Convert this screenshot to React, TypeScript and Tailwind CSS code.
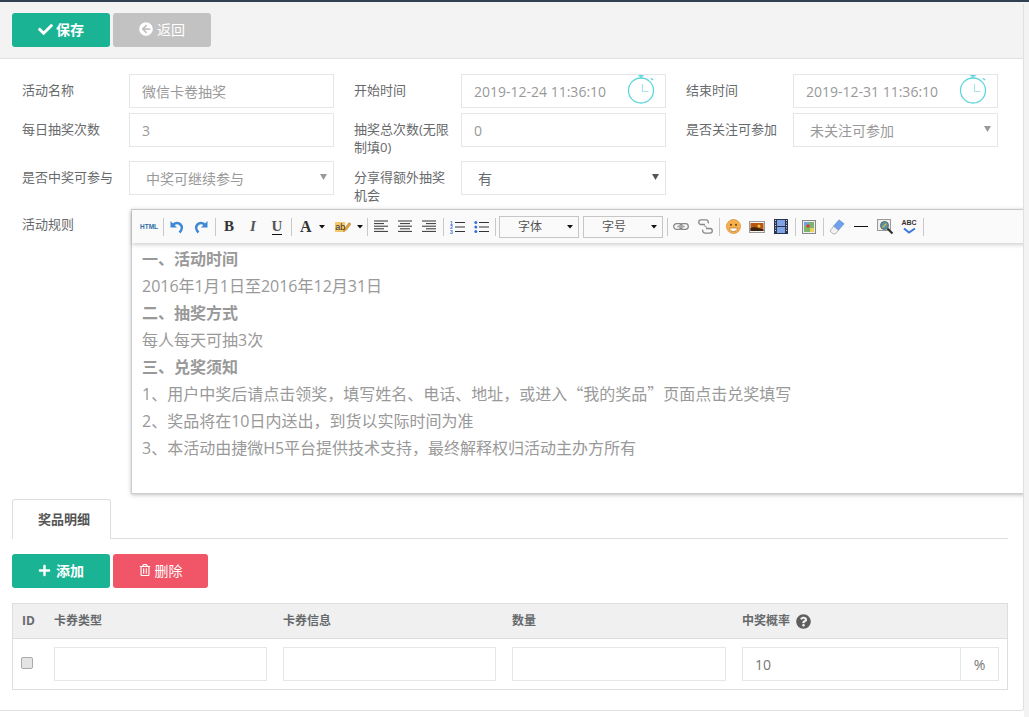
import { FaCheck, FaArrowCircleLeft, FaPlus, FaRegTrashAlt, FaQuestionCircle } from 'react-icons/fa';

const inputCls =
  'h-[34px] w-full border border-[#e5e6e7] bg-white px-3 text-[14px] text-[#999] outline-none';

function Clock() {
  return (
    <svg width="28" height="30" viewBox="0 0 28 30" className="absolute right-[11px] top-0" fill="none">
      <circle cx="14" cy="16.5" r="12.5" stroke="#5fd6dc" strokeWidth="1.3" />
      <path d="M15.500 10v7.500h6" stroke="#a5e5ea" strokeWidth="1.2" />
      <path d="M11.500 1.800h5M14 1.800v2.500" stroke="#5fd6dc" strokeWidth="1.4" />
      <path d="M24 4.200l2 1.800" stroke="#5fd6dc" strokeWidth="1.4" />
    </svg>
  );
}

function Field({ label, children }: { label: string; children: React.ReactNode }) {
  return (
    <div className="flex w-[332px] shrink-0">
      <label className="w-[107px] shrink-0 pr-2 pt-[7px] text-[13px] leading-[18px] text-[#676a6c]">{label}</label>
      <div className="w-[205px] shrink-0">{children}</div>
    </div>
  );
}

function SelectBox({ value, dark }: { value: string; dark?: boolean }) {
  return (
    <div className={`relative flex h-[34px] items-center border border-[#e5e6e7] bg-white pl-4 text-[14px] ${dark ? 'text-[#676a6c]' : 'text-[#999]'}`}>
      {value}
      <svg width="7" height="6" viewBox="0 0 7 6" className="absolute right-[6px] top-[12px]">
        <path d="M0 0h7L3.500 6z" fill={dark ? '#555' : '#999'} />
      </svg>
    </div>
  );
}

function DateInput({ value }: { value: string }) {
  return (
    <div className="relative">
      <input readOnly value={value} className={inputCls} />
      <Clock />
    </div>
  );
}

function Sep() {
  return (
    <span className="flex h-[18px] w-1 shrink-0 justify-center">
      <span className="h-full w-px bg-[#c8c8c8]" />
    </span>
  );
}

function Btn({ children, w = 'w-6' }: { children?: React.ReactNode; w?: string }) {
  return <span className={`flex h-[18px] shrink-0 items-center justify-center ${w}`}>{children}</span>;
}

function Caret() {
  return (
    <svg width="6" height="4" viewBox="0 0 6 4" className="shrink-0">
      <path d="M0 0h6L3 3.500z" fill="#111" />
    </svg>
  );
}

function Lines({ kind }: { kind: 'left' | 'center' | 'right' }) {
  const short = kind === 'left' ? 0 : kind === 'center' ? 2 : 4;
  const rows = [
    [14, 0],
    [10, short],
    [14, 0],
    [10, short],
    [14, 0],
  ];
  return (
    <svg width="14" height="13" viewBox="0 0 14 13">
      {rows.map(([w, x], i) => (
        <rect key={i} x={x} y={i * 2.6 + 0.5} width={w} height="1" fill="#333" />
      ))}
    </svg>
  );
}

function ToolSelect({ label }: { label: string }) {
  return (
    <span className="flex h-[22px] w-20 shrink-0 items-center justify-between border border-[#c6c6c6] pl-[18px] pr-[5px] text-[12px] text-[#555]">
      {label}
      <Caret />
    </span>
  );
}

function Toolbar() {
  return (
    <div className="flex h-[33px] items-center bg-[#fafafa] pl-[3px] shadow-[0_2px_4px_rgba(0,0,0,0.18)]">
      <Btn w="w-[26px] pl-[2px]">
        <span className="font-['Liberation_Sans',sans-serif] text-[6.500px] font-bold text-[#2e6da4]">HTML</span>
      </Btn>
      <Sep />
      <Btn>
        <svg width="14" height="14" viewBox="0 0 14 14" fill="none">
          <path d="M0.500 1v6.500H7z" fill="#3c88d4" />
          <path d="M3 5c2-2.500 5.500-2.500 7.500-.500 2 2 1.500 5.500-1 8" stroke="#3c88d4" strokeWidth="2.600" />
        </svg>
      </Btn>
      <Btn>
        <svg width="14" height="14" viewBox="0 0 14 14" fill="none">
          <path d="M13.500 1v6.500H7z" fill="#3c88d4" />
          <path d="M11 5C9 2.500 5.500 2.500 3.500 4.500c-2 2-1.500 5.500 1 8" stroke="#3c88d4" strokeWidth="2.600" />
        </svg>
      </Btn>
      <Sep />
      <Btn><span className="font-['Liberation_Serif',serif] text-[15px] font-bold text-[#333]">B</span></Btn>
      <Btn><span className="font-['Liberation_Serif',serif] text-[15px] font-bold italic text-[#555]">I</span></Btn>
      <Btn><span className="border-b border-[#111] font-['Liberation_Serif',serif] text-[15px] font-bold leading-[15px] text-[#555]">U</span></Btn>
      <Sep />
      <span className="flex h-[18px] w-9 shrink-0 items-center gap-[7px] pl-[7px]">
        <span className="font-['Liberation_Serif',serif] text-[16px] font-bold text-[#333]">A</span>
        <Caret />
      </span>
      <span className="flex h-[18px] w-9 shrink-0 items-center gap-[6px] pl-[6px]">
        <svg width="16" height="12" viewBox="0 0 16 12" className="shrink-0">
          <rect x="0" y="1" width="10" height="10" fill="#f7c86b" />
          <path d="M8.500 10.500l1-3 4.500-6 2 1.500-4.500 6z" fill="#e8a33a" stroke="#8a6a2a" strokeWidth="0.400" />
          <text x="0.300" y="9" fontSize="9" fontFamily="Liberation Sans" fill="#333">ab</text>
        </svg>
        <Caret />
      </span>
      <Sep />
      <Btn><Lines kind="left" /></Btn>
      <Btn><Lines kind="center" /></Btn>
      <Btn><Lines kind="right" /></Btn>
      <Sep />
      <Btn>
        <svg width="15" height="14" viewBox="0 0 15 14">
          <text x="0" y="4.500" fontSize="5" fontWeight="700" fontFamily="Liberation Sans" fill="#3a6fe0">1</text>
          <text x="0" y="9" fontSize="5" fontWeight="700" fontFamily="Liberation Sans" fill="#3a6fe0">2</text>
          <text x="0" y="13.500" fontSize="5" fontWeight="700" fontFamily="Liberation Sans" fill="#3a6fe0">3</text>
          <path d="M5 2.500h10M5 7h10M5 11.500h10" stroke="#333" strokeWidth="1" />
        </svg>
      </Btn>
      <Btn>
        <svg width="15" height="14" viewBox="0 0 15 14">
          <circle cx="1.800" cy="2.500" r="1.500" fill="#3a6fe0" />
          <circle cx="1.800" cy="7" r="1.500" fill="#3a6fe0" />
          <circle cx="1.800" cy="11.500" r="1.500" fill="#3a6fe0" />
          <path d="M5 2.500h10M5 7h10M5 11.500h10" stroke="#333" strokeWidth="1" />
        </svg>
      </Btn>
      <Sep />
      <span className="flex gap-1 pl-0.5">
        <ToolSelect label="字体" />
        <ToolSelect label="字号" />
      </span>
      <span className="w-0.5 shrink-0" />
      <Sep />
      <Btn>
        <svg width="16" height="7" viewBox="0 0 16 7" fill="none">
          <rect x="0.700" y="0.700" width="8.500" height="5.600" rx="2.800" stroke="#888" strokeWidth="1.300" />
          <rect x="6.800" y="0.700" width="8.500" height="5.600" rx="2.800" stroke="#888" strokeWidth="1.300" />
          <path d="M4 3.500h8" stroke="#aaa" strokeWidth="1.300" />
        </svg>
      </Btn>
      <Btn>
        <svg width="15" height="15" viewBox="0 0 15 15" fill="none">
          <path d="M7 5.500H3a2.300 2.300 0 0 1 0-4.600h5a2.300 2.300 0 0 1 2 3.500" stroke="#888" strokeWidth="1.300" />
          <path d="M8 9.500h4a2.300 2.300 0 0 1 0 4.600H7a2.300 2.300 0 0 1-2-3.500" stroke="#888" strokeWidth="1.300" />
          <path d="M6 6.500l3 2" stroke="#aaa" strokeWidth="1.200" />
        </svg>
      </Btn>
      <Sep />
      <Btn>
        <svg width="15" height="15" viewBox="0 0 15 15">
          <circle cx="7.500" cy="7.500" r="7" fill="#f6b04e" stroke="#d98a2b" strokeWidth="0.700" />
          <circle cx="5" cy="5.800" r="1.100" fill="#7a4a14" />
          <circle cx="10" cy="5.800" r="1.100" fill="#7a4a14" />
          <path d="M3.500 9h8c-.5 2.500-2 3.500-4 3.500S4 11.500 3.500 9z" fill="#fff" stroke="#a8621c" strokeWidth="0.600" />
        </svg>
      </Btn>
      <Btn>
        <svg width="16" height="12" viewBox="0 0 16 12">
          <rect x="0.500" y="0.500" width="15" height="11" fill="#f4f4f4" stroke="#999" />
          <rect x="1.500" y="2" width="13" height="8" fill="#b8560f" />
          <circle cx="10" cy="5" r="1.500" fill="#f7c04a" />
          <path d="M1.500 7l4-1 9 2.500V10h-13z" fill="#3a2410" />
        </svg>
      </Btn>
      <Btn>
        <svg width="14" height="15" viewBox="0 0 14 15">
          <rect x="0" y="0" width="14" height="15" fill="#2a3350" />
          <rect x="3" y="1" width="8" height="6" fill="#7ea4e6" />
          <rect x="3" y="8" width="8" height="6" fill="#7ea4e6" />
          <path d="M1 1.500h1M1 4h1M1 6.500h1M1 9h1M1 11.500h1M12 1.500h1M12 4h1M12 6.500h1M12 9h1M12 11.500h1" stroke="#ddd" strokeWidth="1" />
        </svg>
      </Btn>
      <Sep />
      <Btn>
        <svg width="14" height="14" viewBox="0 0 14 14">
          <rect x="0.500" y="0.500" width="13" height="13" fill="#eee" stroke="#888" />
          <rect x="2" y="2" width="10" height="10" fill="#7fb56a" />
          <rect x="2" y="2" width="5" height="4" fill="#6fa6df" />
          <circle cx="6" cy="6" r="1.800" fill="#d8403a" />
          <rect x="8" y="8" width="4" height="4" fill="#e6d35a" />
        </svg>
      </Btn>
      <Sep />
      <Btn>
        <svg width="16" height="16" viewBox="0 0 16 16">
          <path d="M10 0.800l5 4-5.500 6.500-5-4z" fill="#6ea2ee" stroke="#5a83c4" strokeWidth="0.600" />
          <path d="M4.500 7.300l5 4-3 3.500H4L1 12z" fill="#f2f2f2" stroke="#999" strokeWidth="0.700" />
        </svg>
      </Btn>
      <Btn><span className="h-px w-[14px] bg-[#111]" /></Btn>
      <Btn>
        <svg width="17" height="16" viewBox="0 0 17 16">
          <rect x="0.500" y="0.500" width="13" height="11" fill="#eee" stroke="#999" />
          <circle cx="7.500" cy="6.500" r="4" fill="#4f92a8" stroke="#666" />
          <path d="M5.500 8.500l4-4" stroke="#d9b84a" strokeWidth="1.200" />
          <path d="M10.500 9.500l5 5" stroke="#333" strokeWidth="2.200" />
        </svg>
      </Btn>
      <Btn>
        <span className="relative flex h-[18px] w-[15px] justify-center">
          <span className="font-['Liberation_Sans',sans-serif] text-[7px] font-bold leading-[10px] text-[#333]">ABC</span>
          <svg width="13" height="7" viewBox="0 0 13 7" className="absolute left-px top-[9px]" fill="none">
            <path d="M1 1.500l5 4 6-4" stroke="#3a78e0" strokeWidth="2" />
          </svg>
        </span>
      </Btn>
      <Sep />
    </div>
  );
}

const rules = [
  { t: '一、活动时间', b: true },
  { t: '2016年1月1日至2016年12月31日' },
  { t: '二、抽奖方式', b: true },
  { t: '每人每天可抽3次' },
  { t: '三、兑奖须知', b: true },
];

export default function App() {
  return (
    <div className="flex h-[717px] w-[1029px] flex-col overflow-hidden bg-white font-['Open_Sans','Noto_Sans_CJK_SC',sans-serif] text-[13px] text-[#676a6c]">
      <div className="h-[2px] shrink-0 bg-[#2f4050]" />
      <div className="flex flex-1">
        <div className="h-[709px] w-[1024px] shrink-0 overflow-hidden rounded-r-[3px] border-r border-b border-[#e0e0e0] bg-white">
          {/* Header */}
          <div className="flex h-[57px] gap-[3px] border-b border-[#e0e0e0] bg-[#f3f3f3] pl-3 pt-[11px]">
            <button className="flex h-[34px] w-[98px] items-center justify-center gap-[3px] rounded-[3px] bg-[#1ab394] pb-[2px] text-[14px] font-bold text-white">
              <FaCheck className="text-[15px]" /> 保存
            </button>
            <button className="flex h-[34px] w-[98px] items-center justify-center gap-1 rounded-[3px] bg-[#c2c2c2] pb-[2px] text-[14px] text-white">
              <FaArrowCircleLeft className="text-[14px]" /> 返回
            </button>
          </div>

          {/* Form */}
          <div className="pt-[15px]">
            <div className="mb-[5px] flex pl-[22px]">
              <Field label="活动名称"><input readOnly value="微信卡卷抽奖" className={inputCls} /></Field>
              <Field label="开始时间"><DateInput value="2019-12-24 11:36:10" /></Field>
              <Field label="结束时间"><DateInput value="2019-12-31 11:36:10" /></Field>
            </div>
            <div className="mb-[5px] flex pl-[22px]">
              <Field label="每日抽奖次数"><input readOnly value="3" className={inputCls} /></Field>
              <Field label="抽奖总次数(无限制填0)"><input readOnly value="0" className={inputCls} /></Field>
              <Field label="是否关注可参加"><SelectBox value="未关注可参加" /></Field>
            </div>
            <div className="mb-[5px] flex pl-[22px]">
              <Field label="是否中奖可参与"><SelectBox value="中奖可继续参与" /></Field>
              <Field label="分享得额外抽奖机会"><SelectBox value="有" dark /></Field>
            </div>

            {/* Editor */}
            <div className="flex pl-[22px]">
              <label className="w-[109px] shrink-0 pt-[6px] leading-[18px]">活动规则</label>
              <div className="h-[285px] w-[900px] shrink-0 border border-[#ccc] shadow-[0_1px_4px_rgba(0,0,0,0.25)]">
                <Toolbar />
                <div className="px-[10px] pt-[3px] text-[16px] leading-[27px] text-[#999]">
                  {rules.map((r) => (
                    <p key={r.t} className={r.b ? 'font-bold' : ''}>{r.t}</p>
                  ))}
                  <p>
                    1、用户中奖后请点击领奖，填写姓名、电话、地址，或进入
                    <span className="font-['Noto_Sans_CJK_SC',sans-serif] leading-[0]">“</span>我的奖品
                    <span className="font-['Noto_Sans_CJK_SC',sans-serif] leading-[0]">”</span>页面点击兑奖填写
                  </p>
                  <p>2、奖品将在10日内送出，到货以实际时间为准</p>
                  <p>3、本活动由捷微H5平台提供技术支持，最终解释权归活动主办方所有</p>
                </div>
              </div>
            </div>

            {/* Tabs */}
            <div className="ml-3 mt-[5px] flex h-10 w-[996px] border-b border-[#dddddd]">
              <div className="-mb-px flex h-10 w-[99px] items-center rounded-t-[3px] border border-b-0 border-[#dddddd] bg-white pl-[25px] font-bold text-[#555]">
                奖品明细
              </div>
            </div>

            <div className="flex gap-[3px] pl-3 pt-[15px]">
              <button className="flex h-[34px] w-[98px] items-center justify-center gap-[5px] rounded-[3px] bg-[#1ab394] pb-[2px] text-[14px] font-bold text-white">
                <FaPlus className="text-[13px]" /> 添加
              </button>
              <button className="flex h-[34px] w-[95px] items-center justify-center gap-1 rounded-[3px] bg-[#f05667] pb-[2px] text-[14px] text-white">
                <FaRegTrashAlt className="text-[12px]" /> 删除
              </button>
            </div>

            {/* Table */}
            <div className="ml-3 mt-[15px] w-[996px] border border-[#dddddd]">
              <div className="grid h-[35px] grid-cols-[32px_229px_229px_230px_274px] items-center border-b border-[#dddddd] bg-[#f0f0f0] text-[12px] font-bold text-[#676a6c]">
                <span className="pl-[9px]">ID</span>
                <span className="pl-[9px]">卡券类型</span>
                <span className="pl-[9px]">卡券信息</span>
                <span className="pl-[9px]">数量</span>
                <span className="flex items-center gap-[6px] pl-[9px]">
                  中奖概率 <FaQuestionCircle className="text-[15px] text-[#5e5e5e]" />
                </span>
              </div>
              <div className="grid h-[50px] grid-cols-[32px_229px_229px_230px_274px] items-start pt-2">
                <span className="pl-2 pt-[10px]">
                  <span className="block h-3 w-3 rounded-[2px] border border-[#aaa] bg-[#e4e4e4]" />
                </span>
                <span className="pl-[9px] pr-[7px]"><input readOnly className={inputCls} /></span>
                <span className="pl-[9px] pr-[7px]"><input readOnly className={inputCls} /></span>
                <span className="pl-[9px] pr-[7px]"><input readOnly className={inputCls} /></span>
                <span className="flex pl-[9px] pr-[8px]">
                  <input readOnly value="10" className="h-[34px] min-w-0 flex-1 border border-[#e5e6e7] px-3 text-[14px] text-[#777] outline-none" />
                  <span className="flex h-[34px] w-[38px] items-center justify-center border border-l-0 border-[#e5e6e7] text-[14px] text-[#777]">%</span>
                </span>
              </div>
            </div>
          </div>
        </div>
        <div className="flex-1 bg-[#f3f3f4]" />
      </div>
    </div>
  );
}
